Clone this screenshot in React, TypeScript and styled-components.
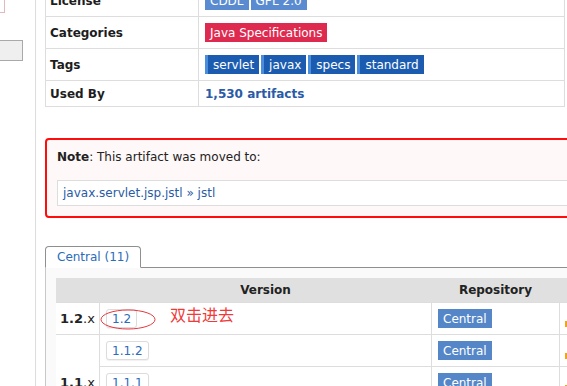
import styled, { createGlobalStyle } from "styled-components";

const GlobalStyle = createGlobalStyle`
  html, body {
    margin: 0;
    overflow: hidden;
    background: #fff;
    font-family: "DejaVu Sans", Verdana, sans-serif;
    font-size: 12px;
    color: #222;
  }
`;

const infoRows = [
  { label: "License", kind: "license", values: ["CDDL", "GPL 2.0"] },
  { label: "Categories", kind: "category", values: ["Java Specifications"] },
  { label: "Tags", kind: "tag", values: ["servlet", "javax", "specs", "standard"] },
];

const versions = [
  { group: "1.2", span: 1, version: "1.2", marked: true },
  { group: "1.1", span: 3, version: "1.1.2", marked: false },
  { group: "", span: 0, version: "1.1.1", marked: false },
  { group: "", span: 0, version: "1.1", marked: false },
];

export default function App() {
  return (
    <>
      <GlobalStyle />
      <Page>
        <Sidebar>
          <SearchStub />
          <SideButton />
        </Sidebar>

        <Main>
          <InfoTable>
            <tbody>
              {infoRows.map((row) => (
                <tr key={row.label}>
                  <Label>{row.label}</Label>
                  <Value>
                    <BadgeList>
                      {row.values.map((v) => (
                        <Badge key={v} $kind={row.kind}>
                          {v}
                        </Badge>
                      ))}
                    </BadgeList>
                  </Value>
                </tr>
              ))}
              <tr>
                <Label $short>Used By</Label>
                <Value $short>
                  <BoldLink>1,530 artifacts</BoldLink>
                </Value>
              </tr>
            </tbody>
          </InfoTable>

          <NoteBox>
            <NoteText>
              <b>Note</b>: This artifact was moved to:
            </NoteText>
            <MovedTo>
              <Link>javax.servlet.jsp.jstl</Link> » <Link>jstl</Link>
            </MovedTo>
          </NoteBox>

          <TabBar>
            <Tab>Central (11)</Tab>
          </TabBar>
          <TabPanel>
            <VersionTable>
              <thead>
                <tr>
                  <HeadCell />
                  <HeadCell>Version</HeadCell>
                  <HeadCell>Repository</HeadCell>
                  <HeadCell $narrow />
                </tr>
              </thead>
              <tbody>
                {versions.map((v) => (
                  <tr key={v.version}>
                    {v.span > 0 && (
                      <GroupCell rowSpan={v.span}>
                        <b>{v.group}</b>.x
                      </GroupCell>
                    )}
                    <VersionCell>
                      <VersionLink>{v.version}</VersionLink>
                      {v.marked && (
                        <>
                          <Circle viewBox="0 0 56 21">
                            <ellipse cx="28" cy="10.5" rx="27" ry="9.5" fill="none" stroke="#e8393f" strokeWidth="1" />
                          </Circle>
                          <Scribble>双击进去</Scribble>
                        </>
                      )}
                    </VersionCell>
                    <RepoCell>
                      <RepoBadge>Central</RepoBadge>
                    </RepoCell>
                    <UsageCell>
                      <Marker />
                    </UsageCell>
                  </tr>
                ))}
              </tbody>
            </VersionTable>
          </TabPanel>
        </Main>
      </Page>
    </>
  );
}

const Page = styled.div`
  display: flex;
  min-height: 386px;
`;

const Sidebar = styled.div`
  width: 35px;
  flex-shrink: 0;
  border-right: 1px solid #ddd;
`;

const SearchStub = styled.div`
  width: 4px;
  height: 12px;
  border-right: 1px solid #e2b9c0;
  border-bottom: 1px solid #e2b9c0;
`;

const SideButton = styled.div`
  width: 22px;
  height: 19px;
  margin-top: 27px;
  background: #efefef;
  border: 1px solid #a9a9a9;
  border-left: none;
`;

const Main = styled.div`
  flex: 1;
  min-width: 0;
  overflow: hidden;
  padding-left: 9px;
  margin-top: -16px;
`;

const InfoTable = styled.table`
  width: 520px;
  border-collapse: collapse;
  border: 1px solid #ddd;
`;

const Label = styled.td<{ $short?: boolean }>`
  width: 144px;
  height: ${({ $short }) => ($short ? "25px" : "31px")};
  padding: 0 4px;
  border-bottom: 1px solid #ddd;
  border-right: 1px solid #ddd;
  font-weight: bold;
  color: #1d1d1d;
  vertical-align: middle;
`;

const Value = styled.td<{ $short?: boolean }>`
  height: ${({ $short }) => ($short ? "25px" : "31px")};
  padding: 0 6px;
  border-bottom: 1px solid #ddd;
  vertical-align: middle;
`;

const BadgeList = styled.div`
  display: flex;
  gap: 2px;
`;

const badgeColors: Record<string, string> = {
  license: "#5a8bd0",
  category: "#df2a50",
  tag: "#1c5cb0",
};

const Badge = styled.span<{ $kind: string }>`
  display: inline-flex;
  align-items: center;
  height: 19px;
  padding: 0 5px;
  background: ${({ $kind }) => badgeColors[$kind]};
  border-left: ${({ $kind }) => ($kind === "tag" ? "3px solid #4a8ddc" : "none")};
  color: #fff;
  font-size: 12px;
`;

const BoldLink = styled.span`
  font-weight: bold;
  color: #2a5ba6;
`;

const NoteBox = styled.div`
  width: 560px;
  margin-top: 31px;
  padding: 10px;
  border: 2px solid #ff0d0d;
  border-radius: 4px;
  background: #fff8f8;
`;

const NoteText = styled.p`
  margin: 0 0 16px;
  line-height: 14px;
  color: #222;
`;

const MovedTo = styled.div`
  padding: 5px;
  line-height: 14px;
  background: #fff;
  border: 1px solid #ddd;
  color: #2a5ba6;
`;

const Link = styled.span`
  color: #2a5ba6;
`;

const TabBar = styled.div`
  display: flex;
  width: 600px;
  margin-top: 28px;
  border-bottom: 1px solid #8f8f8f;
`;

const Tab = styled.div`
  height: 20px;
  line-height: 20px;
  padding: 0 11px;
  margin-bottom: -1px;
  border: 1px solid #8f8f8f;
  border-bottom: 1px solid #fff;
  border-radius: 4px 4px 0 0;
  background: #fff;
  color: #2a6cba;
`;

const TabPanel = styled.div`
  width: 600px;
  padding: 10px;
  border-left: 1px solid #c8c8c8;
  background: #fafafa;
`;

const VersionTable = styled.table`
  border-collapse: collapse;
  background: #fff;
`;

const HeadCell = styled.th<{ $narrow?: boolean }>`
  height: 24px;
  padding: 0;
  background: #e0e0e0;
  font-weight: bold;
  color: #222;
  text-align: center;
  width: ${({ $narrow }) => ($narrow ? "40px" : "auto")};
`;

const GroupCell = styled.td`
  width: 43px;
  padding: 0;
  border: 1px solid #ddd;
  border-left: none;
  text-align: center;
  vertical-align: middle;
  font-size: 13px;
`;

const VersionCell = styled.td`
  position: relative;
  width: 319px;
  height: 31px;
  padding: 0 6px;
  border: 1px solid #ddd;
  vertical-align: middle;
`;

const VersionLink = styled.span`
  display: inline-flex;
  align-items: center;
  height: 17px;
  padding: 0 5px;
  border: 1px solid #dcdcdc;
  border-radius: 3px;
  background: #fff;
  color: #2a6cba;
  font-size: 12px;
  box-shadow: 0 1px 1px rgba(0, 0, 0, 0.06);
`;

const Circle = styled.svg`
  position: absolute;
  left: 0;
  top: 6px;
  width: 56px;
  height: 21px;
`;

const Scribble = styled.span`
  position: absolute;
  left: 70px;
  top: -1px;
  font-family: "Noto Sans CJK SC", sans-serif;
  font-size: 16px;
  color: #f03a3a;
`;

const RepoCell = styled.td`
  width: 115px;
  padding: 0 6px;
  border: 1px solid #ddd;
  vertical-align: middle;
`;

const RepoBadge = styled.span`
  display: inline-flex;
  align-items: center;
  height: 19px;
  padding: 0 5px;
  background: #5587c8;
  color: #fff;
  font-size: 12px;
`;

const UsageCell = styled.td`
  padding: 0 5px 7px;
  border: 1px solid #ddd;
  vertical-align: bottom;
`;

const Marker = styled.span`
  display: block;
  width: 8px;
  height: 6px;
  background: #f3a21c;
`;
